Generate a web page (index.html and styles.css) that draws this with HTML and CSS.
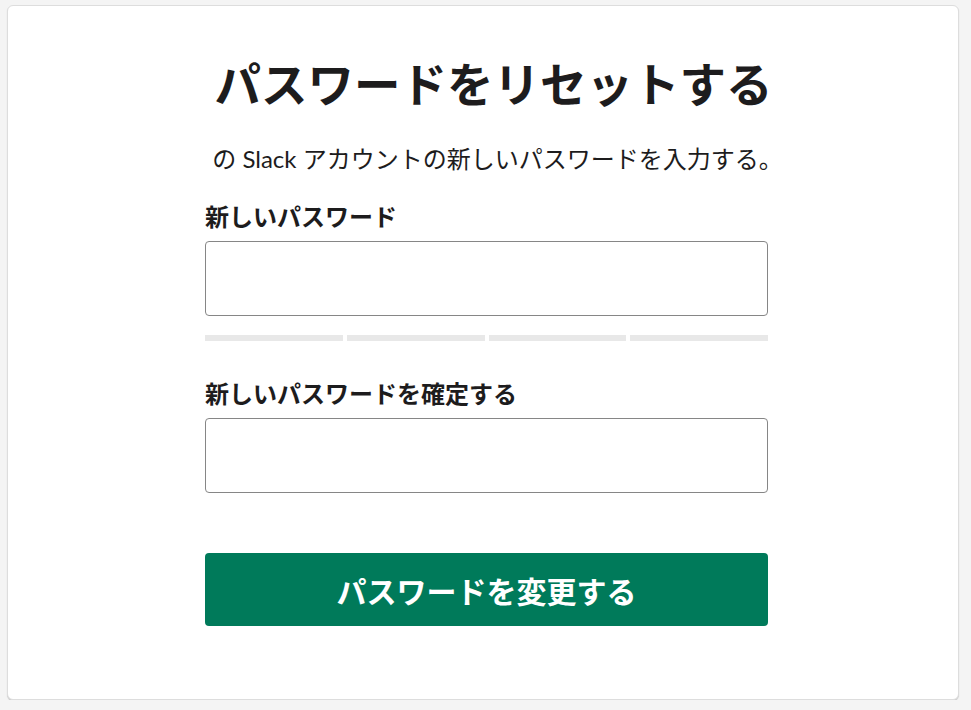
FILE: index.html
```html
<!DOCTYPE HTML>
<html>

<head>
    <title>パスワードをリセットする | Slack</title>
    <meta charset="UTF-8" />
    <link rel="stylesheet" href="styles.css">
</head>

<body>
    <div class="card">
        <div class="form">
            <h1 class="title">パスワードをリセットする</h1>
            <p class="lead">の Slack アカウントの新しいパスワードを入力する。</p>

            <label class="label first" for="pw1">新しいパスワード</label>
            <input class="field" id="pw1" type="password">
            <div class="meter">
                <span></span><span></span><span></span><span></span>
            </div>

            <label class="label" for="pw2">新しいパスワードを確定する</label>
            <input class="field" id="pw2" type="password">

            <button class="submit" type="button">パスワードを変更する</button>
        </div>
    </div>
</body>

</html>
```

FILE: styles.css
```css
body {
    /*外側の背景*/
    margin: 0;
    background: #f4f4f4;
    font-family: Lato, "Noto Sans CJK JP", sans-serif;
    color: #1d1c1d;
}

.card {
    /*白いカード*/
    width: 950px;
    height: 693px;
    margin: 5px 0 0 7px;
    background: #fff;
    border: 1px solid #dddddd;
    border-radius: 6px;
    box-shadow: 0 1px 1px rgba(0, 0, 0, 0.18);
}

.form {
    width: 563px;
    margin-left: 197px;
    display: flex;
    flex-direction: column;
}

.title {
    /*見出しは少し右寄りで中央揃え*/
    margin: 45px -20px 0 -6px;
    font-size: 46.5px;
    line-height: 66px;
    font-weight: 700;
    text-align: center;
}

.lead {
    margin: 26px -28px 0 -6px;
    font-size: 24px;
    line-height: 32px;
    text-align: center;
}

.label {
    margin-top: 37px;
    font-size: 24px;
    line-height: 32px;
    font-weight: 700;
}

.label.first {
    margin-top: 26px;
}

.field {
    height: 75px;
    margin-top: 8px;
    box-sizing: border-box;
    border: 1px solid #868686;
    border-radius: 4px;
    font-size: 20px;
}

.meter {
    /*パスワード強度バー*/
    display: flex;
    gap: 4px;
    margin-top: 19px;
}

.meter span {
    flex: 1;
    height: 6px;
    background: #e8e8e8;
}

.submit {
    height: 73px;
    margin-top: 60px;
    border: none;
    border-radius: 4px;
    background: #007a5a;
    color: #fff;
    font-family: Lato, "Noto Sans CJK JP", sans-serif;
    font-size: 30px;
    font-weight: 700;
}
```
